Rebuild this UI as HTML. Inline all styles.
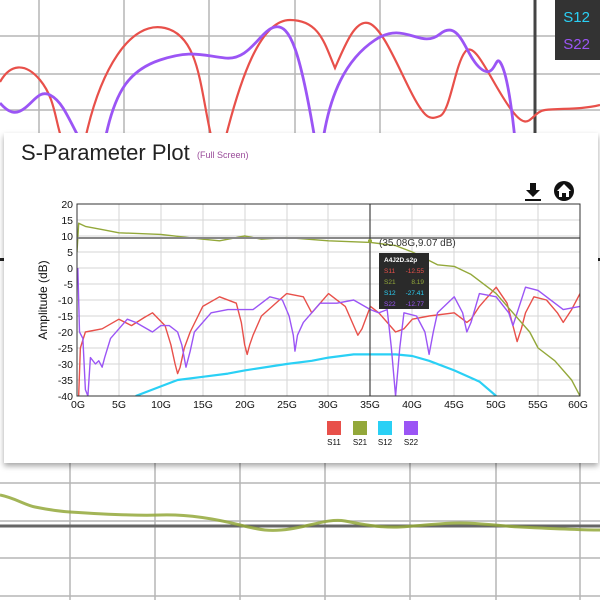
<!DOCTYPE html>
<html><head><meta charset="utf-8"><style>
html,body{margin:0;padding:0;background:#fff;width:600px;height:600px;overflow:hidden;font-family:"Liberation Sans",sans-serif}
</style></head><body>
<svg width="600" height="600" viewBox="0 0 600 600" xmlns="http://www.w3.org/2000/svg" font-family="Liberation Sans, sans-serif">
<defs><filter id="sh" x="-5%" y="-5%" width="110%" height="115%"><feDropShadow dx="0" dy="3" stdDeviation="3" flood-color="#000" flood-opacity="0.35"/></filter></defs>
<g stroke="#b5b5b5" stroke-width="1.5">
<line x1="39" y1="0" x2="39" y2="140"/><line x1="124" y1="0" x2="124" y2="140"/><line x1="209" y1="0" x2="209" y2="140"/><line x1="295" y1="0" x2="295" y2="140"/><line x1="380" y1="0" x2="380" y2="140"/>
<line x1="0" y1="36" x2="600" y2="36"/><line x1="0" y1="74" x2="600" y2="74"/><line x1="0" y1="110" x2="600" y2="110"/>
</g>
<line x1="535" y1="0" x2="535" y2="140" stroke="#444" stroke-width="3"/>
<path fill="none" stroke="#e8504a" stroke-width="2.2" d="M0,82 C10,64 25,62 40,80 S55,120 62,140 M85,140 C100,70 130,20 165,28 S200,90 212,140 M225,140 C240,80 260,20 290,20 S325,45 335,68 C345,45 355,20 368,23 S395,60 410,90 S430,120 440,116 S455,65 465,52 S490,80 510,108 S530,112 545,110 S580,110 600,105"/>
<path fill="none" stroke="#9b55f5" stroke-width="2.8" d="M0,103 C8,112 15,116 25,108 S40,90 50,95 S65,110 80,140 M105,140 C115,90 130,70 160,60 S200,55 225,58 S260,30 275,27 S300,50 315,140 M323,140 C330,95 345,60 375,40 S420,50 440,34 S465,55 480,68 S495,55 500,62 S510,90 515,140"/>
<rect x="555" y="0" width="45" height="60" fill="#333"/>
<text x="590" y="22" fill="#2ad0f5" font-size="15" text-anchor="end">S12</text>
<text x="590" y="49" fill="#9b55f5" font-size="15" text-anchor="end">S22</text>
<rect x="0" y="258" width="5" height="3" fill="#222"/><rect x="596" y="258" width="4" height="3" fill="#222"/>
<g stroke="#b5b5b5" stroke-width="1.5">
<line x1="70" y1="460" x2="70" y2="600"/><line x1="155" y1="460" x2="155" y2="600"/><line x1="240" y1="460" x2="240" y2="600"/><line x1="325" y1="460" x2="325" y2="600"/><line x1="410" y1="460" x2="410" y2="600"/><line x1="496" y1="460" x2="496" y2="600"/><line x1="580" y1="460" x2="580" y2="600"/>
<line x1="0" y1="483" x2="600" y2="483"/><line x1="0" y1="521" x2="600" y2="521"/><line x1="0" y1="558" x2="600" y2="558"/><line x1="0" y1="596" x2="600" y2="596"/>
</g>
<line x1="0" y1="526" x2="600" y2="526" stroke="#666" stroke-width="3"/>
<path fill="none" stroke="#93a83a" stroke-width="3" opacity="0.85" d="M0,495 C15,498 25,505 35,507 S55,511 70,512 S130,516 160,515 S220,520 240,525 S270,532 290,529 S330,518 345,521 S380,528 400,527 S440,523 460,523 S500,526 520,527 S580,530 600,530"/>
<rect x="4" y="133" width="594" height="330" fill="#fff" filter="url(#sh)"/>
<text x="21" y="160" font-size="22" fill="#222">S-Parameter Plot</text>
<text x="197" y="158" font-size="9" fill="#9a4c9a">(Full Screen)</text>
<path d="M530,183 h6 v7 h4 l-7,7 l-7,-7 h4z" fill="#111"/><rect x="525" y="199" width="16" height="2" fill="#111"/>
<circle cx="564" cy="191" r="10" fill="#111"/>
<path d="M564,184 l-7,7 h2 v6 h10 v-6 h2z" fill="#fff"/><rect x="562" y="193" width="4" height="4" fill="#111"/>
<g stroke="#d6d6d6" stroke-width="1">
<line x1="119" y1="204" x2="119" y2="396"/><line x1="161" y1="204" x2="161" y2="396"/><line x1="203" y1="204" x2="203" y2="396"/><line x1="245" y1="204" x2="245" y2="396"/><line x1="287" y1="204" x2="287" y2="396"/><line x1="328" y1="204" x2="328" y2="396"/><line x1="412" y1="204" x2="412" y2="396"/><line x1="454" y1="204" x2="454" y2="396"/><line x1="496" y1="204" x2="496" y2="396"/><line x1="538" y1="204" x2="538" y2="396"/>
<line x1="77" y1="220" x2="580" y2="220"/><line x1="77" y1="236" x2="580" y2="236"/><line x1="77" y1="252" x2="580" y2="252"/><line x1="77" y1="268" x2="580" y2="268"/><line x1="77" y1="284" x2="580" y2="284"/><line x1="77" y1="300" x2="580" y2="300"/><line x1="77" y1="316" x2="580" y2="316"/><line x1="77" y1="332" x2="580" y2="332"/><line x1="77" y1="348" x2="580" y2="348"/><line x1="77" y1="364" x2="580" y2="364"/><line x1="77" y1="380" x2="580" y2="380"/>
</g>
<svg x="77" y="204" width="503" height="192" viewBox="0 -20 60 60" preserveAspectRatio="none" overflow="hidden">
<g fill="none" stroke-linejoin="round">
<polyline vector-effect="non-scaling-stroke" stroke="#2ad0f5" stroke-width="2.2" points="7,40 10,37 12,35 15,34 18,33 20,32 25,30 28,29 30,28 33,27 38,27 40,27.5 42,29 45,32 48,35.5 50,40"/>
<polyline vector-effect="non-scaling-stroke" stroke="#e8504a" stroke-width="1.4" points="0.2,40 0.4,25 1,20 3,19 5,16 6.5,18 8,15.5 9,14 10.5,18 11.2,24 11.7,30 12,33 12.3,31 12.8,25 13.5,20 15,12 17,9 19,11 19.6,17 20,24 20.3,27 20.6,24 21,21 22,15 25,8 27,9 28,14 30,8 32,12 33,18 33.5,21 34,19 35,12 36,14 38,20 39,19 40,16 42,15 45,14 46,16 46.5,17 47,16 48,12 50,6 51.3,11 52,18 52.5,23 53,19 53.5,14 54.5,9 56,10 57.3,14 58,17 59,13 60,8"/>
<polyline vector-effect="non-scaling-stroke" stroke="#9b55f5" stroke-width="1.4" points="0.1,0 0.3,20 0.7,22 1,38 1.3,40 1.6,28 2.2,30 2.6,29 3,31 3.3,28 4,22 6,16 7,17 9,20 10,18 11,18 12,20 12.5,24 13,31 13.5,26 14,20 16,14 18,13 21,13 23,9 24.5,10 25.3,15 25.8,21 26,26 26.3,21 27,17 29,11 31,11 33,10 35,13 36,14 37,13 37.5,25 38,40 38.5,25 39,14 40.5,15 41.5,20 42,27 42.5,20 43,14 45,9 46,14 46.5,20 47,17 48,8 50,9 51.5,14 52,18 52.5,14 53.5,6 55,7 56,9 57,11 58,13 60,12"/>
<polyline vector-effect="non-scaling-stroke" stroke="#93a83a" stroke-width="1.4" points="0,-5 0.2,-14 1,-13 3,-12 5,-11 10,-10.5 15,-9 17,-8.5 20,-10 22,-9 25,-9.5 30,-8.5 35,-8 38,-7 40,-5 43,-1 45,-0.5 47,2 50,8 52,14 54,20 55,25 57,29 59,35 60,40"/>
</g>
</svg>
<line x1="77" y1="238" x2="580" y2="238" stroke="#888" stroke-width="2"/>
<line x1="370" y1="204" x2="370" y2="396" stroke="#444" stroke-width="1.2"/>
<rect x="77" y="204" width="503" height="192" fill="none" stroke="#333" stroke-width="1"/>
<circle cx="370" cy="241" r="2" fill="#93a83a"/>
<text x="379" y="246" font-size="10" fill="#333">(35.08G,9.07 dB)</text>
<rect x="379" y="253" width="50" height="56" fill="#2a2a2a"/>
<text x="384" y="262" font-size="6.5" fill="#fff" font-weight="bold">A4J2D.s2p</text>
<g font-size="6.5">
<text x="384" y="273" fill="#e8504a">S11</text><text x="424" y="273" fill="#e8504a" text-anchor="end">-12.55</text>
<text x="384" y="284" fill="#93a83a">S21</text><text x="424" y="284" fill="#93a83a" text-anchor="end">8.19</text>
<text x="384" y="295" fill="#2ad0f5">S12</text><text x="424" y="295" fill="#2ad0f5" text-anchor="end">-27.41</text>
<text x="384" y="306" fill="#9b55f5">S22</text><text x="424" y="306" fill="#9b55f5" text-anchor="end">-12.77</text>
</g>
<g font-size="10.5" fill="#111" text-anchor="end">
<text x="73" y="208">20</text><text x="73" y="224">15</text><text x="73" y="240">10</text><text x="73" y="256">5</text><text x="73" y="272">0</text><text x="73" y="288">-5</text><text x="73" y="304">-10</text><text x="73" y="320">-15</text><text x="73" y="336">-20</text><text x="73" y="352">-25</text><text x="73" y="368">-30</text><text x="73" y="384">-35</text><text x="73" y="400">-40</text>
</g>
<g font-size="10.5" fill="#111" text-anchor="middle">
<text x="78" y="408">0G</text><text x="119" y="408">5G</text><text x="161" y="408">10G</text><text x="203" y="408">15G</text><text x="245" y="408">20G</text><text x="287" y="408">25G</text><text x="328" y="408">30G</text><text x="370" y="408">35G</text><text x="412" y="408">40G</text><text x="454" y="408">45G</text><text x="496" y="408">50G</text><text x="538" y="408">55G</text><text x="578" y="408">60G</text>
</g>
<text transform="translate(47,300) rotate(-90)" font-size="12" fill="#111" text-anchor="middle">Amplitude (dB)</text>
<rect x="327" y="421" width="14" height="14" fill="#e8504a"/><rect x="353" y="421" width="14" height="14" fill="#93a83a"/><rect x="378" y="421" width="14" height="14" fill="#2ad0f5"/><rect x="404" y="421" width="14" height="14" fill="#9b55f5"/>
<g font-size="8" fill="#111" text-anchor="middle">
<text x="334" y="445">S11</text><text x="360" y="445">S21</text><text x="385" y="445">S12</text><text x="411" y="445">S22</text>
</g>
</svg>
</body></html>
